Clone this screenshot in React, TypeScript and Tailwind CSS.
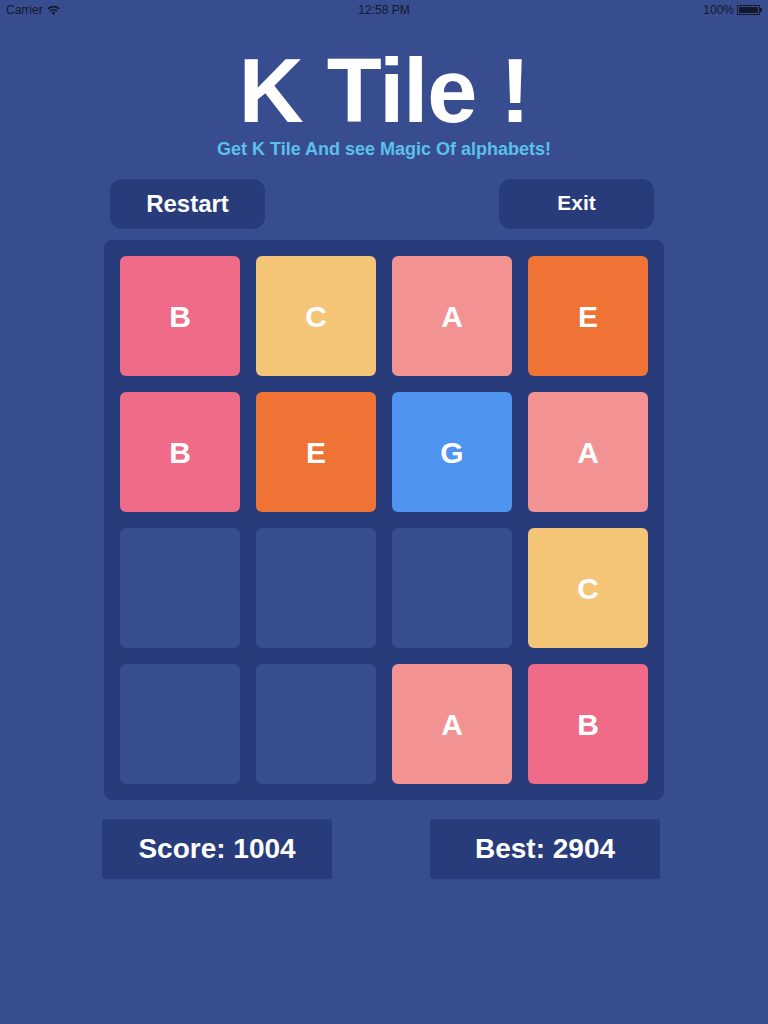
import React from "react";

type Tile = { letter: string; color: string } | null;

// board state, row by row
const board: Tile[][] = [
  [
    { letter: "B", color: "bg-[#f06b87]" },
    { letter: "C", color: "bg-[#f4c576]" },
    { letter: "A", color: "bg-[#f29293]" },
    { letter: "E", color: "bg-[#f07336]" },
  ],
  [
    { letter: "B", color: "bg-[#f06b87]" },
    { letter: "E", color: "bg-[#f07336]" },
    { letter: "G", color: "bg-[#4f94f0]" },
    { letter: "A", color: "bg-[#f29293]" },
  ],
  [null, null, null, { letter: "C", color: "bg-[#f4c576]" }],
  [null, null, { letter: "A", color: "bg-[#f29293]" }, { letter: "B", color: "bg-[#f06b87]" }],
];

function StatusBar() {
  return (
    <div className="h-5 px-[6px] flex items-center justify-between text-[12px] text-[#15182a] font-['Liberation_Sans',Arial,sans-serif]">
      <div className="flex items-center gap-[4px] w-[120px]">
        <span>Carrier</span>
        <svg width="13" height="10" viewBox="0 0 13 10" fill="#15182a">
          <path d="M6.5 10 L4.6 7.6 A3 3 0 0 1 8.4 7.6 Z" />
          <path d="M2.6 5.6 A5.6 5.6 0 0 1 10.4 5.6 L9.3 6.8 A4 4 0 0 0 3.7 6.8 Z" />
          <path d="M0.5 3.2 A8.8 8.8 0 0 1 12.5 3.2 L11.4 4.4 A7.2 7.2 0 0 0 1.6 4.4 Z" />
        </svg>
      </div>
      <span>12:58 PM</span>
      <div className="flex items-center justify-end gap-[3px] w-[120px]">
        <span>100%</span>
        <div className="flex items-center">
          <div className="w-[23px] h-[10px] border border-[#15182a] p-[1px]">
            <div className="w-full h-full bg-[#15182a]" />
          </div>
          <div className="w-[2px] h-[4px] bg-[#15182a]" />
        </div>
      </div>
    </div>
  );
}

export default function App() {
  return (
    <div className="w-[768px] h-[1024px] bg-[#384d8f] font-['Liberation_Sans',Arial,sans-serif]">
      <StatusBar />

      {/* TITLE */}
      <div className="mt-[26px] text-center">
        <h1 className="text-[90px] leading-[90px] font-bold text-white tracking-[-1px]">K Tile !</h1>
        <p className="mt-[3px] text-[18px] leading-[20px] font-bold text-[#5bc0ec]">
          Get K Tile And see Magic Of alphabets!
        </p>
      </div>

      {/* BUTTONS */}
      <div className="mt-[20px] w-[560px] mx-auto pl-[6px] pr-[10px] flex justify-between">
        <button className="w-[155px] h-[50px] rounded-[12px] bg-[#283c7c] text-white text-[24px] font-bold">
          Restart
        </button>
        <button className="w-[155px] h-[50px] rounded-[12px] bg-[#283c7c] text-white text-[21px] font-bold pb-[2px]">
          Exit
        </button>
      </div>

      {/* BOARD */}
      <div className="mt-[11px] w-[560px] mx-auto p-[16px] rounded-[8px] bg-[#283c7c] grid grid-cols-4 gap-[16px]">
        {board.flat().map((tile, i) => (
          <div
            key={i}
            className={`h-[120px] rounded-[6px] flex items-center justify-center text-white text-[30px] font-bold ${
              tile ? tile.color : "bg-[#384d8f]"
            }`}
          >
            {tile?.letter}
          </div>
        ))}
      </div>

      {/* SCORES */}
      <div className="mt-[19px] pl-[102px] flex gap-[98px]">
        <div className="w-[230px] h-[60px] rounded-[3px] bg-[#283c7c] flex items-center justify-center text-white text-[28px] font-bold">
          Score: 1004
        </div>
        <div className="w-[230px] h-[60px] rounded-[3px] bg-[#283c7c] flex items-center justify-center text-white text-[28px] font-bold">
          Best: 2904
        </div>
      </div>
    </div>
  );
}
